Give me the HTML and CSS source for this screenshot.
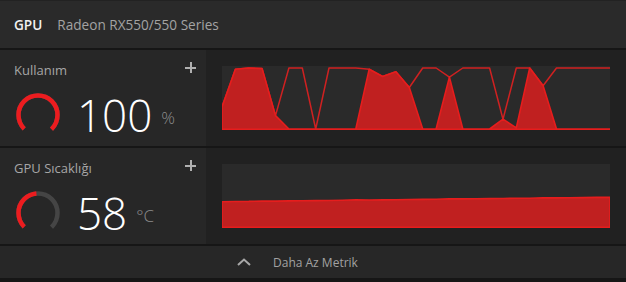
FILE: index.html
```html
<!DOCTYPE html>
<html lang="tr">
<head>
  <meta charset="UTF-8" />
  <title>GPU Metrikleri</title>
  <link rel="stylesheet" href="styles.css">
</head>
<body>
  <div class="app">
    <div class="header">
      <span class="title">GPU</span>
      <span class="device">Radeon RX550/550 Series</span>
    </div>

    <div class="metric">
      <div class="info">
        <div class="label-row">
          <span class="label">Kullanım</span>
          <span class="plus"></span>
        </div>
        <div class="value-row">
          <svg class="gauge" viewBox="0 0 48 48" width="48" height="48">
            <circle class="gauge-bg" cx="24" cy="24" r="19.5" />
            <circle class="gauge-fg" cx="24" cy="24" r="19.5" />
          </svg>
          <span class="value">100</span>
          <span class="unit">%</span>
        </div>
      </div>
      <div class="chart-wrap">
        <svg class="chart" id="chartUsage" viewBox="0 0 388 64" width="388" height="64"></svg>
      </div>
    </div>

    <div class="metric">
      <div class="info">
        <div class="label-row">
          <span class="label">GPU Sıcaklığı</span>
          <span class="plus"></span>
        </div>
        <div class="value-row">
          <svg class="gauge" viewBox="0 0 48 48" width="48" height="48">
            <circle class="gauge-bg" cx="24" cy="24" r="19.5" />
            <circle class="gauge-fg" cx="24" cy="24" r="19.5" />
          </svg>
          <span class="value">58</span>
          <span class="unit">°C</span>
        </div>
      </div>
      <div class="chart-wrap">
        <svg class="chart" id="chartTemp" viewBox="0 0 388 64" width="388" height="64"></svg>
      </div>
    </div>

    <div class="footer">
      <svg class="chevron" viewBox="0 0 14 8" width="14" height="8">
        <polyline points="1,7 7,1.5 13,7" />
      </svg>
      <span class="footer-text">Daha Az Metrik</span>
    </div>
  </div>

<script>
  // usage history: filled series + outline series
  const usageFill = [36,98,100,99,22,0,0,0,0,0,0,98,86,94,68,0,0,85,0,0,0,16,2,100,71,0,0,0,0,0];
  const usageLine = [36,98,100,99,22,100,100,0,100,100,100,98,86,94,68,100,100,85,100,100,100,16,100,100,71,100,100,100,100,100];
  const tempFill = [];
  for (let i = 0; i < 30; i++) {
    tempFill.push(41.5 + i * 0.25 + (i % 7 === 3 ? 0.4 : 0));
  }

  const W = 388, H = 64;
  const ns = 'http://www.w3.org/2000/svg';

  function toPoints(values) {
    const step = W / (values.length - 1);
    return values.map((v, i) => {
      const x = i * step;
      const y = 63 - v * 0.61;
      return x.toFixed(1) + ',' + y.toFixed(1);
    });
  }

  function drawChart(svg, fill, line) {
    if (line) {
      const pl = document.createElementNS(ns, 'polyline');
      pl.setAttribute('points', toPoints(line).join(' '));
      pl.setAttribute('class', 'series-line');
      svg.appendChild(pl);
    }
    const pts = toPoints(fill);
    pts.push(W + ',' + (H - 0.8), '0,' + (H - 0.8));
    const pg = document.createElementNS(ns, 'polygon');
    pg.setAttribute('points', pts.join(' '));
    pg.setAttribute('class', 'series-fill');
    svg.appendChild(pg);
  }

  function setGauge(fg, bg, fraction) {
    const c = 2 * Math.PI * 19.5;
    const arc = c * 0.75;
    fg.style.strokeDasharray = (arc * fraction) + ' ' + c;
    bg.style.strokeDasharray = arc + ' ' + c;
  }

  drawChart(document.getElementById('chartUsage'), usageFill, usageLine);
  drawChart(document.getElementById('chartTemp'), tempFill);

  document.querySelectorAll('.gauge').forEach((g, i) => {
    setGauge(g.querySelector('.gauge-fg'), g.querySelector('.gauge-bg'), i === 0 ? 1 : 0.48);
  });
</script>
</body>
</html>
```

FILE: styles.css
```css
html, body {
  margin: 0;
  padding: 0;
  background: #1a1a1a;
  font-family: "Open Sans", "Noto Sans", Arial, sans-serif;
  overflow: hidden;
}
.app {
  width: 626px;
  height: 282px;
  display: flex;
  flex-direction: column;
  gap: 2px;
  background: #161616;
}
.header {
  height: 47px;
  border-top: 1px solid #222;
  background: #2a2a2a;
  display: flex;
  align-items: center;
  padding-left: 14px;
  gap: 15px;
  font-size: 13.6px;
}
.title {
  color: #f2f2f2;
  font-weight: 600;
}
.device {
  color: #a3a3a3;
}
.metric {
  height: 96px;
  display: flex;
  background: #212121;
}
.info {
  width: 206px;
  box-sizing: border-box;
  background: #272727;
  padding: 11px 10px 0 14px;
}
.label-row {
  display: flex;
  justify-content: space-between;
  height: 18px;
}
.label {
  color: #a6a6a6;
  font-size: 13px;
  line-height: 18px;
}
.plus {
  position: relative;
  width: 11px;
  height: 11px;
  margin-top: 1px;
}
.plus::before, .plus::after {
  content: "";
  position: absolute;
  background: #b0b0b0;
}
.plus::before {
  left: 0; top: 5px; width: 11px; height: 1.5px;
}
.plus::after {
  left: 5px; top: 0; width: 1.5px; height: 11px;
}
.value-row {
  display: flex;
  align-items: center;
  margin-top: 12px;
  height: 48px;
}
.gauge {
  flex: none;
}
.gauge circle {
  fill: none;
  stroke-width: 4.5;
  transform: rotate(135deg);
  transform-origin: 24px 24px;
}
.gauge-bg {
  stroke: #454545;
}
.gauge-fg {
  stroke: #ec1c1f;
}
.value {
  color: #ffffff;
  font-size: 44px;
  font-weight: 300;
  line-height: 48px;
  margin-left: 15px;
}
.unit {
  color: #8c8c8c;
  font-size: 17px;
  font-weight: 300;
  margin-left: 9px;
  margin-top: 4px;
}
.chart-wrap {
  flex: 1;
  padding: 16px;
}
.chart {
  display: block;
  background: #2a2a2a;
}
.series-line {
  fill: none;
  stroke: #cf2121;
  stroke-width: 1.5;
  stroke-linejoin: round;
}
.series-fill {
  fill: #c02020;
  stroke: #e61d1d;
  stroke-width: 1.6;
  stroke-linejoin: round;
}
.footer {
  height: 32px;
  background: #272727;
  display: flex;
  align-items: center;
  padding-left: 237px;
  gap: 22px;
}
.chevron polyline {
  fill: none;
  stroke: #a8a8a8;
  stroke-width: 2;
}
.footer-text {
  color: #a2a2a2;
  font-size: 12px;
}
```
